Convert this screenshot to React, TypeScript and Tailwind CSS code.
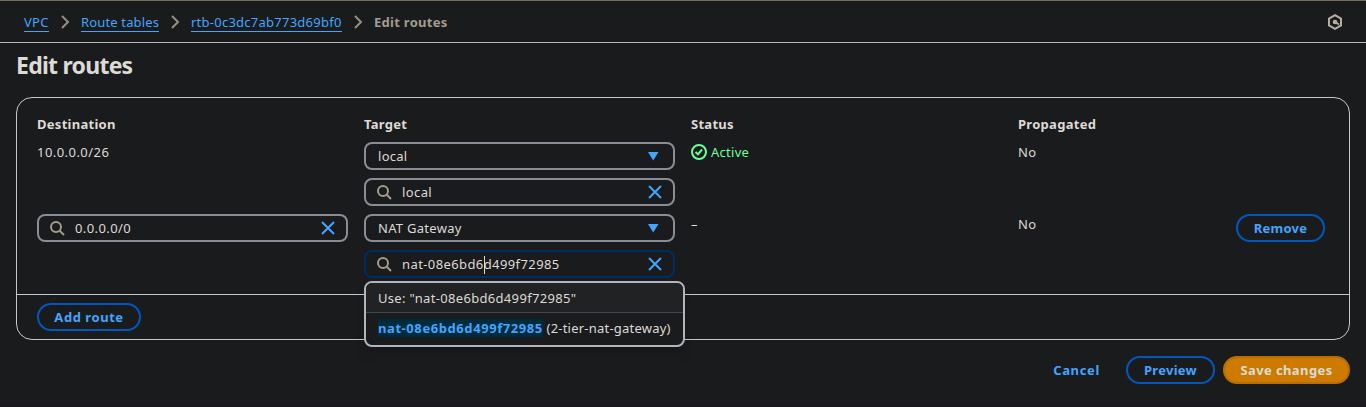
import React from "react";

const chevron = (
  <svg className="h-4 w-4 shrink-0" viewBox="0 0 16 16" fill="none" stroke="#968f84" strokeWidth="2">
    <path d="M5 2l6 6-6 6" />
  </svg>
);

function SearchIcon() {
  return (
    <svg className="h-4 w-4 shrink-0" viewBox="0 0 16 16" fill="none" stroke="#a39b8b" strokeWidth="2">
      <circle cx="7" cy="7" r="5" />
      <path d="M15 15l-4.500-4.500" />
    </svg>
  );
}

function CloseIcon() {
  return (
    <svg className="h-4 w-4 shrink-0" viewBox="0 0 16 16" fill="none" stroke="#42a5ff" strokeWidth="2">
      <path d="M2 2l12 12M14 2L2 14" />
    </svg>
  );
}

function SelectField({ value }: { value: string }) {
  return (
    <div className="flex h-7 w-[311px] items-center justify-between rounded-lg border-2 border-[#8c8c94] px-3">
      <span>{value}</span>
      <svg className="h-4 w-4 shrink-0" viewBox="0 0 16 16" fill="#42a5ff">
        <path d="M3 4h10.500L8.250 12.500z" />
      </svg>
    </div>
  );
}

function SearchField({ children, focused = false }: { children: React.ReactNode; focused?: boolean }) {
  return (
    <div
      className={
        focused
          ? "flex h-7 w-[311px] items-center rounded-lg border-2 border-[#002b66] px-[10px]"
          : "flex h-7 w-[311px] items-center rounded-lg border-2 border-[#8c8c94] px-[10px]"
      }
    >
      <SearchIcon />
      <span className="ml-[10px] flex-1 tracking-[0.4px]">{children}</span>
      <CloseIcon />
    </div>
  );
}

function Crumb({ children, className }: { children: string; className: string }) {
  return (
    <a className={`h-[19px] whitespace-nowrap border-b border-[#42a5ff] leading-[19px] text-[#42a5ff] ${className}`}>
      {children}
    </a>
  );
}

export default function App() {
  return (
    <div className="h-[407px] w-[1366px] overflow-hidden border-b border-[#15121a] bg-[#1a1b1d] font-['Noto_Sans','Open_Sans',sans-serif] text-[13px] leading-5 tracking-[0.28px] text-[#dedad5]">
      <header className="flex h-[43px] items-center justify-between border-b border-t border-b-[#bcbab7] border-t-[#766d5f] pl-6 pr-[23px]">
        <nav className="flex items-center gap-2 pt-px">
          <Crumb className="w-[25px]">VPC</Crumb>
          {chevron}
          <Crumb className="w-[78px] tracking-[0.15px]">Route tables</Crumb>
          {chevron}
          <Crumb className="w-[151px] tracking-[0.25px]">rtb-0c3dc7ab773d69bf0</Crumb>
          {chevron}
          <span className="font-bold text-[#a39b8f]">Edit routes</span>
        </nav>
        <svg className="h-4 w-4" viewBox="0 0 16 16" fill="none" stroke="#b5aea4" strokeWidth="2">
          <path d="M8 1.200l6 3.400v6.800l-6 3.400-6-3.400V4.600z" />
          <circle cx="8" cy="8" r="1.300" fill="#b5aea4" />
          <path d="M8 8l4 2.500" />
        </svg>
      </header>

      <main className="px-4">
        <h1 className="h-[54px] pt-[6px] text-[23px] font-bold leading-[32px] tracking-[-0.75px]">Edit routes</h1>

        <section className="h-[243px] rounded-2xl border border-[#c6c6cd]">
          <div className="grid h-[196px] grid-cols-[327px_327px_327px_218px_auto] grid-rows-[28px_72px_1fr] pl-5 pt-4">
            <div className="font-bold">Destination</div>
            <div className="font-bold">Target</div>
            <div className="font-bold">Status</div>
            <div className="font-bold">Propagated</div>
            <div />

            <div className="tracking-[0.45px]">10.0.0.0/26</div>
            <div className="flex flex-col gap-2">
              <SelectField value="local" />
              <SearchField>local</SearchField>
            </div>
            <div className="flex h-5 items-center gap-1 text-[#6aff9b]">
              <svg className="h-4 w-4" viewBox="0 0 16 16" fill="none" stroke="currentColor" strokeWidth="2">
                <circle cx="8" cy="8" r="7" />
                <path d="M4.500 8l2.500 2.300 4-4.800" />
              </svg>
              <span>Active</span>
            </div>
            <div>No</div>
            <div />

            <SearchField>0.0.0.0/0</SearchField>
            <div className="relative flex flex-col gap-2">
              <SelectField value="NAT Gateway" />
              <SearchField focused>
                nat-08e6bd6
                <i className="-mr-px inline-block h-[18px] w-px bg-[#dedad5] align-middle" />
                d499f72985
              </SearchField>
              <div className="absolute left-0 top-[67px] z-10 h-[66px] w-[321px] overflow-hidden whitespace-nowrap rounded-lg border-2 border-[#b4b4bb] bg-[#1a1b1d] shadow-lg">
                <div className="h-[30px] border-b border-[#424650] bg-[#202224] px-3 leading-[30px] tracking-[0.32px]">
                  Use: "nat-08e6bd6d499f72985"
                </div>
                <div className="px-3 leading-[30px] tracking-[0.22px]">
                  <b className="bg-[#002b3c] tracking-[0.58px] text-[#42a5ff]">nat-08e6bd6d499f72985</b> (2-tier-nat-gateway)
                </div>
              </div>
            </div>
            <div>–</div>
            <div>No</div>
            <button className="h-7 w-[89px] rounded-full border-2 border-[#0058bd] font-bold text-[#42a5ff]">Remove</button>
          </div>
          <div className="flex h-[45px] items-center border-t border-[#c6c6cd] pl-5">
            <button className="h-7 w-[104px] rounded-full border-2 border-[#0058bd] font-bold tracking-[0.55px] text-[#42a5ff]">
              Add route
            </button>
          </div>
        </section>

        <footer className="mt-4 flex justify-end gap-2 font-bold">
          <button className="mr-3 h-7 px-[6px] tracking-[0.65px] text-[#42a5ff]">Cancel</button>
          <button className="h-7 w-[89px] rounded-full border-2 border-[#0058bd] text-[#42a5ff]">Preview</button>
          <button className="h-7 w-[127px] rounded-full border-2 border-[#bb6d00] bg-[#cc7b00] tracking-[0.4px]">Save changes</button>
        </footer>
      </main>
    </div>
  );
}
